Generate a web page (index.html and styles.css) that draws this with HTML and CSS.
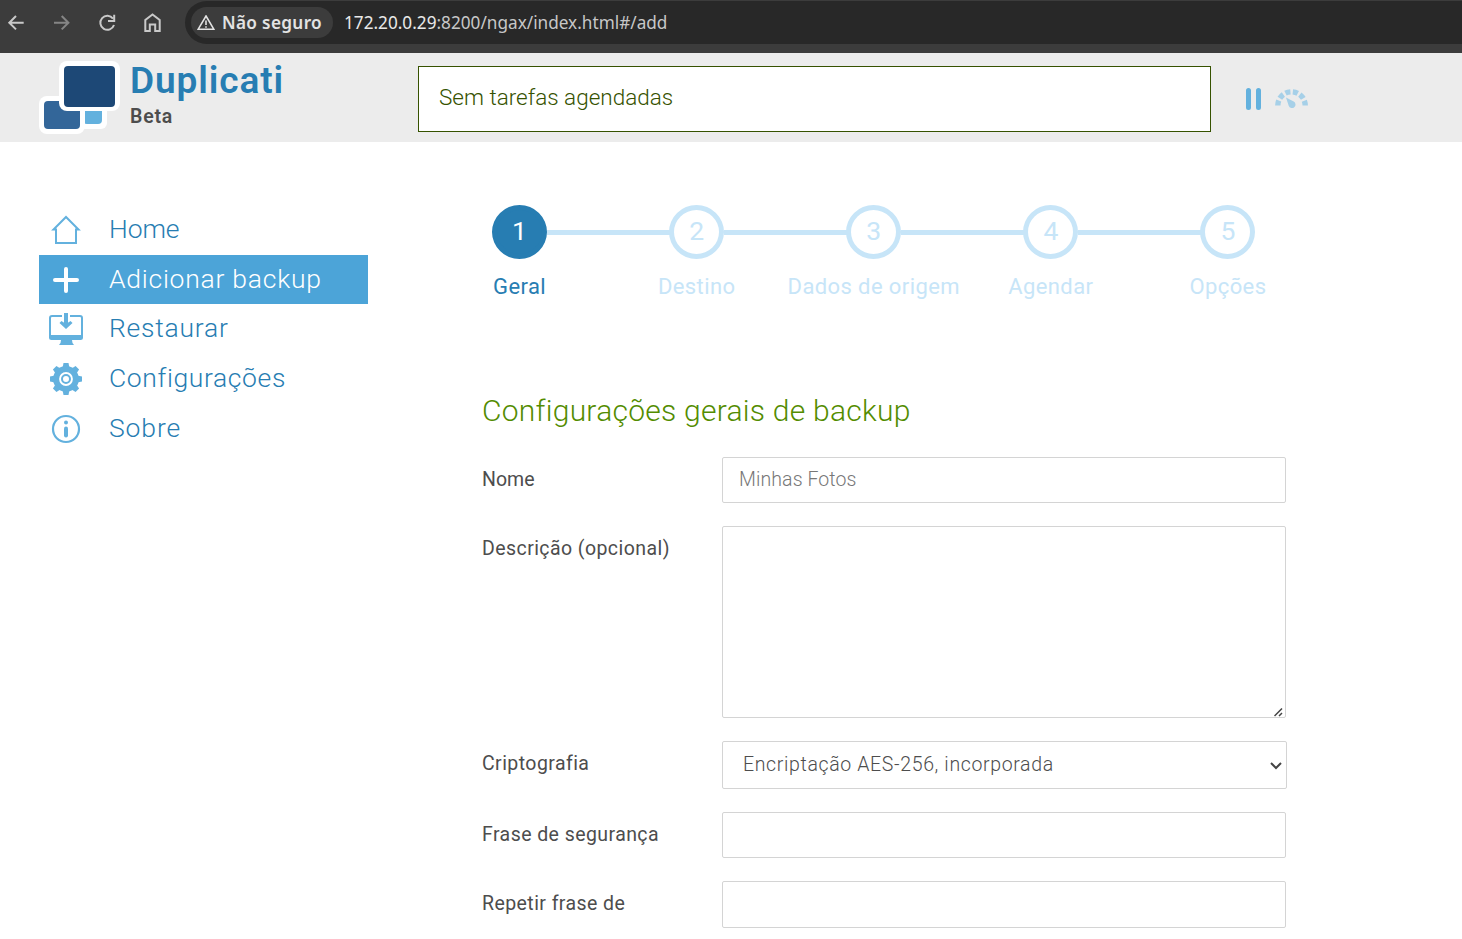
FILE: index.html
```html
<!DOCTYPE html>
<html lang="pt-BR">
<head>
<meta charset="utf-8">
<title>Duplicati</title>
<link rel="stylesheet" href="styles.css">
</head>
<body>
<div class="browser-bar">
  <svg class="nav-icons" width="185" height="45" viewBox="0 0 185 45" fill="none" stroke="#c9c9c9" stroke-width="2">
    <path d="M23.700 22.700H9.500M16 16l-6.700 6.700 6.700 6.700"/>
    <path stroke="#858585" d="M54 22.700h14.200M61.700 16l6.700 6.700-6.700 6.700"/>
    <path d="M113 18.700A7 7 0 1 0 114 25M114.200 14.800v6.200h-6.200"/>
    <path d="M145.300 31V20l7.200-5.600 7.200 5.600v11h-4.500v-6.500h-5.400V31z"/>
  </svg>
  <div class="address">
    <div class="chip">
      <svg width="18" height="16" viewBox="0 0 18 16" fill="none" stroke="#e3e3e3" stroke-width="1.6"><path d="M9 1L16.800 14.200H1.200zM9 5.500v4.500M9 11.200v1.500"/></svg>
      <span>Não seguro</span>
    </div>
    <span class="url"><b>172.20.0.29</b>:8200/ngax/index.html#/add</span>
  </div>
</div>
<header class="header">
  <svg class="logo" width="82" height="76" viewBox="0 0 82 76">
    <rect x="40" y="40" width="28" height="29" rx="6" fill="#fff"/>
    <rect x="44" y="44" width="19" height="20" rx="4" fill="#63b1de"/>
    <rect x="0" y="36" width="46" height="38" rx="8" fill="#fff"/>
    <rect x="5" y="41" width="36" height="28" rx="4" fill="#336699"/>
    <rect x="20" y="1" width="61" height="50" rx="8" fill="#fff"/>
    <rect x="25" y="6" width="51" height="41" rx="4" fill="#1d4876"/>
  </svg>
  <div class="brand"><span class="brand-name">Duplicati</span><span class="brand-sub">Beta</span></div>
  <div class="status"><span>Sem tarefas agendadas</span></div>
  <svg class="controls" width="66" height="24" viewBox="0 0 66 24">
    <path d="M3.500 3.500v17M13.500 3.500v17" stroke="#63b1de" stroke-width="5" stroke-linecap="round"/>
    <path d="M32.800 18.500a13.700 13.700 0 0 1 27.400 0" fill="none" stroke="#a6d0e8" stroke-width="5.400" stroke-dasharray="5.100 2.480"/>
    <path d="M41 10.500l7.700 4a3.500 3.500 0 1 1-5 4.200z" fill="#a6d0e8"/>
  </svg>
</header>
<div class="layout">
  <nav class="menu">
    <a class="item home"><svg width="36" height="36" viewBox="0 0 36 36" fill="none" stroke="#63b1de" stroke-width="2"><path d="M8 31V17.500H5.500L18 5l12.500 12.500H28V31z"/></svg><span>Home</span></a>
    <a class="item active"><svg width="36" height="36" viewBox="0 0 36 36" stroke="#fff" stroke-width="4" stroke-linecap="round"><path d="M18 7v22M7 18h22"/></svg><span>Adicionar backup</span></a>
    <a class="item restore"><svg width="36" height="36" viewBox="0 0 36 36" fill="none" stroke="#63b1de" stroke-width="2"><g transform="translate(0 1)"><path d="M14 4H4a2 2 0 0 0-2 2v18h32V6a2 2 0 0 0-2-2H22"/><path d="M1 23h34v2.500a2.500 2.500 0 0 1-2.500 2.500H24l.5 3 1.500 2H11l1.500-2 .5-3H3.500A2.500 2.500 0 0 1 1 25.500z" fill="#63b1de" stroke="none"/><path d="M18 1v11" stroke-width="4"/><path d="M11.500 11l2-2L18 12l4.500-3 2 2L18 17z" fill="#63b1de" stroke="none"/></g></svg><span>Restaurar</span></a>
    <a class="item"><svg width="36" height="36" viewBox="0 0 36 36" fill="none" stroke="#63b1de"><circle cx="18" cy="18" r="9.900" stroke-width="6"/><circle cx="18" cy="18" r="4" stroke-width="2"/><g fill="#63b1de" stroke="none"><path id="tooth" d="M14.500 7L15.500 2h5l1 5z"/><use href="#tooth" transform="rotate(45 18 18)"/><use href="#tooth" transform="rotate(90 18 18)"/><use href="#tooth" transform="rotate(135 18 18)"/><use href="#tooth" transform="rotate(180 18 18)"/><use href="#tooth" transform="rotate(225 18 18)"/><use href="#tooth" transform="rotate(270 18 18)"/><use href="#tooth" transform="rotate(315 18 18)"/></g></svg><span>Configurações</span></a>
    <a class="item about"><svg width="36" height="36" viewBox="0 0 36 36" fill="none" stroke="#63b1de"><circle cx="18" cy="18" r="13" stroke-width="2.200"/><path d="M18 17.500v7" stroke-width="4" stroke-linecap="round"/><circle cx="18" cy="11.500" r="2" fill="#63b1de" stroke="none"/></svg><span>Sobre</span></a>
  </nav>
  <main class="content">
    <ol class="steps">
      <li class="step current"><span class="num">1</span><span class="name">Geral</span></li>
      <li class="step"><span class="num">2</span><span class="name">Destino</span></li>
      <li class="step"><span class="num">3</span><span class="name">Dados de origem</span></li>
      <li class="step"><span class="num">4</span><span class="name">Agendar</span></li>
      <li class="step"><span class="num">5</span><span class="name">Opções</span></li>
    </ol>
    <form class="form">
      <h2>Configurações gerais de backup</h2>
      <div class="row"><label class="tight">Nome</label><div class="field"><span class="placeholder">Minhas Fotos</span></div></div>
      <div class="row"><label>Descrição (opcional)</label><div class="field area"><svg width="9" height="9" viewBox="0 0 9 9" stroke="#444" stroke-width="1.500"><path d="M.5 8L8 .5M5 8l3-3"/></svg></div></div>
      <div class="row"><label>Criptografia</label><div class="field select"><span>Encriptação AES-256, incorporada</span><svg width="12" height="8" viewBox="0 0 12 8" fill="none" stroke="#444" stroke-width="2"><path d="M1 1l5 5 5-5"/></svg></div></div>
      <div class="row"><label>Frase de segurança</label><div class="field"></div></div>
      <div class="row"><label>Repetir frase de</label><div class="field last"></div></div>
    </form>
  </main>
</div>
</body>
</html>
```
FILE: styles.css
```css
* { box-sizing: border-box; }
body { margin: 0; height: 939px; overflow: hidden; background: #fff; font-family: Roboto, sans-serif; color: #4d4d4d; }
.browser-bar { display: flex; height: 53px; background: #3c3c3c; padding-top: 1px; }
.nav-icons { flex: none; margin-top: -1px; }
.address { flex: 1; display: flex; align-items: center; height: 43px; padding-left: 6px; background: #282828; border-radius: 22px 0 0 22px; font: 17.200px/22px "Noto Sans", sans-serif; color: #c7c7c7; }
.chip { display: flex; align-items: center; width: 142px; height: 31px; padding-left: 6px; gap: 7px; border-radius: 16px; background: #3c3c3c; color: #e3e3e3; font-weight: 600; letter-spacing: .33px; white-space: nowrap; }
.url { margin-left: 11px; white-space: nowrap; }
.url b { font-weight: 400; color: #e8e8e8; }
.header { display: flex; height: 89px; background: #ececec; padding-left: 39px; }
.logo { flex: none; margin-top: 7px; }
.brand { display: flex; flex-direction: column; width: 297px; padding: 6px 0 0 9px; }
.brand-name { font-size: 37px; line-height: 44px; font-weight: 600; letter-spacing: .9px; color: #277db2; }
.brand-sub { font-size: 19.500px; line-height: 27px; font-weight: 600; letter-spacing: .8px; }
.status { width: 793px; height: 66px; margin-top: 13px; padding-left: 20px; border: 1px solid #365200; background: #fff; color: #365200; font-size: 22.500px; line-height: 60px; font-weight: 300; }
.controls { margin: 34px 0 0 34px; }
.layout { display: flex; }
.menu { width: 368px; padding: 63.400px 0 0 39px; }
.item { display: flex; align-items: center; height: 49.800px; padding-left: 9px; gap: 25px; font-size: 26.500px; font-weight: 300; letter-spacing: .62px; color: #277db2; }
.item span { padding-bottom: 2.500px; }
.item.home { letter-spacing: -.1px; }
.item.home span { padding-bottom: 4px; }
.item.active { height: 49px; background: #4ca4d8; color: #fff; letter-spacing: .75px; }
.item.restore { letter-spacing: .75px; }
.item.about { letter-spacing: .9px; }
.content { padding: 63px 0 0 63px; }
.steps { display: flex; margin: 0; padding: 0; list-style: none; }
.step { position: relative; width: 177.100px; display: flex; flex-direction: column; align-items: center; color: #c7e5f8; }
.step + .step::before { content: ""; position: absolute; top: 25px; right: calc(50% + 26px); width: 124px; height: 5px; background: #c7e5f8; }
.num { width: 55px; height: 54px; border: 5px solid #c7e5f8; border-radius: 50%; text-align: center; font-size: 26.500px; line-height: 42px; }
.name { margin-top: 13px; font-size: 22px; line-height: 30px; letter-spacing: .4px; }
.current { color: #277db2; }
.current .num { background: #277db2; border-color: #277db2; color: #fff; }
.form { padding: 90px 0 0 51px; }
h2 { margin: 0 0 27px; font-size: 30px; line-height: 38px; font-weight: 300; letter-spacing: .25px; color: #538c00; }
.row { display: flex; margin-bottom: 23px; }
label { width: 240px; line-height: 46px; font-size: 19.500px; letter-spacing: .43px; white-space: nowrap; }
.tight { letter-spacing: 0; }
.field { width: 564px; height: 46px; border: 1px solid #d4d4d4; border-radius: 2px; padding-left: 16px; line-height: 43px; font-size: 19.500px; font-weight: 300; }
.placeholder { color: #777; letter-spacing: .1px; }
.area { height: 192px; display: flex; justify-content: flex-end; align-items: flex-end; padding: 0 2px 0 0; }
.select { width: 565px; height: 48px; display: flex; align-items: center; justify-content: space-between; padding: 0 4px 0 20px; letter-spacing: .64px; }
.select span { padding-bottom: 2px; }
.select svg { margin-top: 2px; }
.last { height: 47px; }
```
